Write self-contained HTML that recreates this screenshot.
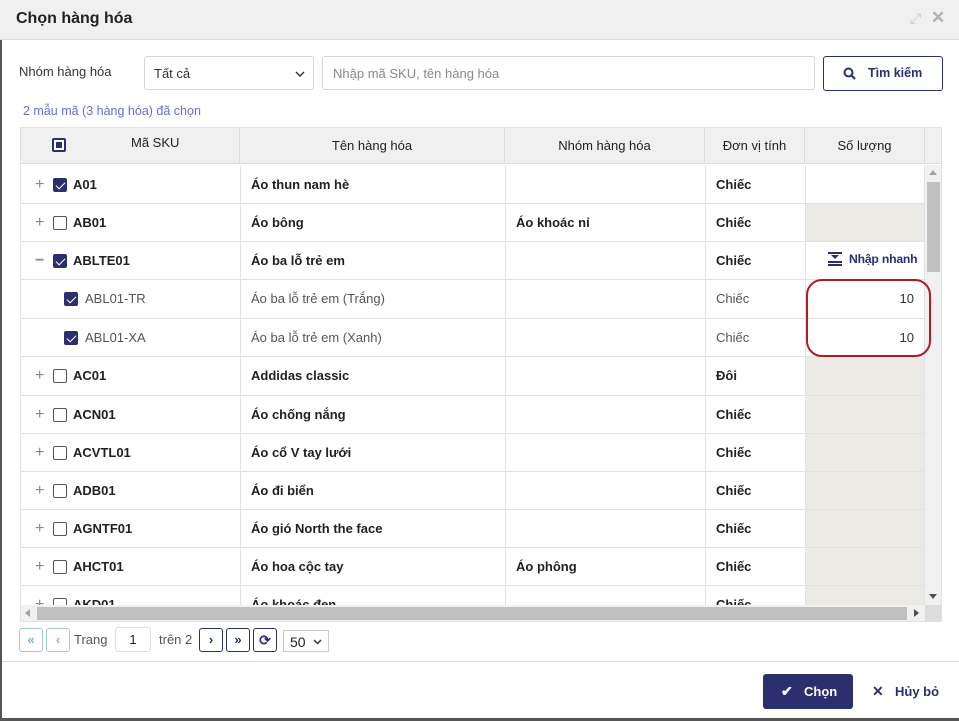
<!DOCTYPE html>
<html><head><meta charset="utf-8"><style>
*{box-sizing:border-box;margin:0;padding:0}
body{width:959px;height:721px;overflow:hidden;background:#fff;font-family:"Liberation Sans",Arial,sans-serif;font-size:13px;color:#212121;position:relative}
.a{position:absolute}
.hdr{left:0;top:0;width:959px;height:40px;background:#f0f0f0;border-bottom:1px solid #dcdcdc}
.cb{position:absolute;width:14px;height:14px;border:1.5px solid #555;border-radius:2px;background:#fff}
.cb.on{background:#2b2f6e;border-color:#2b2f6e}
.cb.on:after{content:"";position:absolute;left:3.5px;top:0.5px;width:4px;height:8px;border:solid #fff;border-width:0 1.8px 1.8px 0;transform:rotate(45deg)}
.row{position:absolute;left:21px;width:904px;height:38px;border-bottom:1px solid #e2e2e2}
.c{position:absolute;top:0;height:100%;border-right:1px solid #e2e2e2;line-height:38px;white-space:nowrap;overflow:hidden}
.b{font-weight:bold}
.g{color:#555}
.plus{position:absolute;left:14px;top:13px;font-size:16px;color:#888;line-height:12px}
.pbtn{position:absolute;top:628px;width:24px;height:24px;border:1px solid #2b2f6e;border-radius:3px;text-align:center;line-height:22px;color:#2b2f6e;font-size:13px;font-weight:bold}
</style></head><body>
<div class="a" style="left:0;top:0;width:2px;height:721px;background:#555"></div>
<div class="a" style="left:0;top:718px;width:959px;height:3px;background:#555"></div>
<div class="a hdr"></div>
<div class="a b" style="left:16px;top:10px;font-size:16px;color:#222">Chọn hàng hóa</div>
<div class="a" style="left:910px;top:10px;color:#c8c8c8;font-size:14px">⤢</div>
<div class="a" style="left:931px;top:8px;color:#b0b0b0;font-size:17px;font-weight:bold">✕</div>

<div class="a" style="left:19px;top:64px;font-size:13px;color:#333">Nhóm hàng hóa</div>
<div class="a" style="left:144px;top:56px;width:170px;height:34px;border:1px solid #d5d5d5;border-radius:3px;padding:9px 9px;color:#333">Tất cả<svg style="position:absolute;right:8px;top:14px" width="10" height="7"><path d="M1 1l4 4 4-4" stroke="#333" stroke-width="1.4" fill="none"/></svg></div>
<div class="a" style="left:322px;top:56px;width:493px;height:34px;border:1px solid #d5d5d5;border-radius:3px;padding:9px 10px;color:#888">Nhập mã SKU, tên hàng hóa</div>
<div class="a" style="left:823px;top:56px;width:120px;height:35px;border:1.5px solid #2b2f6e;border-radius:3px;line-height:32px;color:#2b2f6e;font-weight:bold;font-size:12.5px"><svg style="position:absolute;left:19px;top:10px" width="13" height="13"><circle cx="5.5" cy="5.5" r="4" stroke="#2b2f6e" stroke-width="2" fill="none"/><path d="M8.5 8.5l3.5 3.5" stroke="#2b2f6e" stroke-width="2.2"/></svg><span style="position:absolute;left:44px">Tìm kiếm</span></div>

<div class="a" style="left:23px;top:104px;color:#6a6ad8;font-size:12.5px">2 mẫu mã (3 hàng hóa) đã chọn</div>

<div class="a" style="left:20px;top:127px;width:922px;height:495px;border:1px solid #e2e2e2"></div>
<div class="a" style="left:21px;top:128px;width:920px;height:36px;background:#f0f0f0;border-bottom:1px solid #ddd"></div>
<div class="a" style="left:21px;top:128px;height:36px;width:920px">
 <div class="c" style="left:0;width:219px;border-color:#ddd"><div class="cb" style="left:31px;top:10px;border:2px solid #2b2f6e"><div style="position:absolute;left:2px;top:2px;width:6px;height:6px;background:#2b2f6e"></div></div><span style="position:absolute;left:110px;top:-4px">Mã SKU</span></div>
 <div class="c" style="left:219px;width:265px;text-align:center;border-color:#ddd;line-height:36px">Tên hàng hóa</div>
 <div class="c" style="left:484px;width:200px;text-align:center;border-color:#ddd;line-height:36px">Nhóm hàng hóa</div>
 <div class="c" style="left:684px;width:100px;text-align:center;border-color:#ddd;line-height:36px">Đơn vị tính</div>
 <div class="c" style="left:784px;width:120px;text-align:center;border-color:#ddd;line-height:36px">Số lượng</div>
</div>

<div class="a" style="left:0;top:0">
<div class="row" style="top:166px"><div class="c" style="left:0;width:220px"><span class="plus">+</span><div class="cb on" style="left:32px;top:12px"></div><span class="b" style="position:absolute;left:52px">A01</span></div><div class="c b" style="left:220px;width:265px;padding-left:10px">Áo thun nam hè</div><div class="c" style="left:485px;width:200px"></div><div class="c b" style="left:685px;width:100px;padding-left:10px">Chiếc</div><div class="c" style="left:785px;width:119px"></div></div>
<div class="row" style="top:204px"><div class="c" style="left:0;width:220px"><span class="plus">+</span><div class="cb" style="left:32px;top:12px"></div><span class="b" style="position:absolute;left:52px">AB01</span></div><div class="c b" style="left:220px;width:265px;padding-left:10px">Áo bông</div><div class="c b" style="left:485px;width:200px;padding-left:10px">Áo khoác nỉ</div><div class="c b" style="left:685px;width:100px;padding-left:10px">Chiếc</div><div class="c" style="left:785px;width:119px;background:#ebeae4"></div></div>
<div class="row" style="top:242px"><div class="c" style="left:0;width:220px"><span class="plus" style="font-weight:bold">−</span><div class="cb on" style="left:32px;top:12px"></div><span class="b" style="position:absolute;left:52px">ABLTE01</span></div><div class="c b" style="left:220px;width:265px;padding-left:10px">Áo ba lỗ trẻ em</div><div class="c" style="left:485px;width:200px"></div><div class="c b" style="left:685px;width:100px;padding-left:10px">Chiếc</div><div class="c" style="left:785px;width:119px;color:#2b2f6e;font-weight:bold;overflow:visible"><svg style="position:absolute;left:22px;top:10px" width="14" height="15"><path d="M0 1h14M0 13h14M0 10h14" stroke="#2b2f6e" stroke-width="2"/><path d="M3 3h8l-4 4z" fill="#2b2f6e"/></svg><span style="position:absolute;left:43px;top:-2px;font-size:12.2px;letter-spacing:-0.2px">Nhập nhanh</span></div></div>
<div class="row" style="top:280px;height:39px"><div class="c" style="left:0;width:220px"><div class="cb on" style="left:43px;top:12px"></div><span class="g" style="position:absolute;left:64px">ABL01-TR</span></div><div class="c g" style="left:220px;width:265px;padding-left:10px">Áo ba lỗ trẻ em (Trắng)</div><div class="c" style="left:485px;width:200px"></div><div class="c g" style="left:685px;width:100px;padding-left:10px">Chiếc</div><div class="c" style="left:785px;width:119px;text-align:right;padding-right:10px;color:#333">10</div></div>
<div class="row" style="top:319px"><div class="c" style="left:0;width:220px"><div class="cb on" style="left:43px;top:12px"></div><span class="g" style="position:absolute;left:64px">ABL01-XA</span></div><div class="c g" style="left:220px;width:265px;padding-left:10px">Áo ba lỗ trẻ em (Xanh)</div><div class="c" style="left:485px;width:200px"></div><div class="c g" style="left:685px;width:100px;padding-left:10px">Chiếc</div><div class="c" style="left:785px;width:119px;text-align:right;padding-right:10px;color:#333">10</div></div>
</div>

<div class="a" style="left:0;top:0">
<div class="row" style="top:357px;height:39px"><div class="c" style="left:0;width:220px"><span class="plus">+</span><div class="cb" style="left:32px;top:12px"></div><span class="b" style="position:absolute;left:52px">AC01</span></div><div class="c b" style="left:220px;width:265px;padding-left:10px">Addidas classic</div><div class="c" style="left:485px;width:200px"></div><div class="c b" style="left:685px;width:100px;padding-left:10px">Đôi</div><div class="c" style="left:785px;width:119px;background:#ebeae4"></div></div>
<div class="row" style="top:396px"><div class="c" style="left:0;width:220px"><span class="plus">+</span><div class="cb" style="left:32px;top:12px"></div><span class="b" style="position:absolute;left:52px">ACN01</span></div><div class="c b" style="left:220px;width:265px;padding-left:10px">Áo chống nắng</div><div class="c" style="left:485px;width:200px"></div><div class="c b" style="left:685px;width:100px;padding-left:10px">Chiếc</div><div class="c" style="left:785px;width:119px;background:#ebeae4"></div></div>
<div class="row" style="top:434px"><div class="c" style="left:0;width:220px"><span class="plus">+</span><div class="cb" style="left:32px;top:12px"></div><span class="b" style="position:absolute;left:52px">ACVTL01</span></div><div class="c b" style="left:220px;width:265px;padding-left:10px">Áo cổ V tay lưới</div><div class="c" style="left:485px;width:200px"></div><div class="c b" style="left:685px;width:100px;padding-left:10px">Chiếc</div><div class="c" style="left:785px;width:119px;background:#ebeae4"></div></div>
<div class="row" style="top:472px"><div class="c" style="left:0;width:220px"><span class="plus">+</span><div class="cb" style="left:32px;top:12px"></div><span class="b" style="position:absolute;left:52px">ADB01</span></div><div class="c b" style="left:220px;width:265px;padding-left:10px">Áo đi biển</div><div class="c" style="left:485px;width:200px"></div><div class="c b" style="left:685px;width:100px;padding-left:10px">Chiếc</div><div class="c" style="left:785px;width:119px;background:#ebeae4"></div></div>
<div class="row" style="top:510px"><div class="c" style="left:0;width:220px"><span class="plus">+</span><div class="cb" style="left:32px;top:12px"></div><span class="b" style="position:absolute;left:52px">AGNTF01</span></div><div class="c b" style="left:220px;width:265px;padding-left:10px">Áo gió North the face</div><div class="c" style="left:485px;width:200px"></div><div class="c b" style="left:685px;width:100px;padding-left:10px">Chiếc</div><div class="c" style="left:785px;width:119px;background:#ebeae4"></div></div>
<div class="row" style="top:548px"><div class="c" style="left:0;width:220px"><span class="plus">+</span><div class="cb" style="left:32px;top:12px"></div><span class="b" style="position:absolute;left:52px">AHCT01</span></div><div class="c b" style="left:220px;width:265px;padding-left:10px">Áo hoa cộc tay</div><div class="c b" style="left:485px;width:200px;padding-left:10px">Áo phông</div><div class="c b" style="left:685px;width:100px;padding-left:10px">Chiếc</div><div class="c" style="left:785px;width:119px;background:#ebeae4"></div></div>
<div class="row" style="top:586px;height:19px;overflow:hidden;border:0"><div class="c" style="left:0;width:220px"><span class="plus">+</span><div class="cb" style="left:32px;top:12px"></div><span class="b" style="position:absolute;left:52px">AKD01</span></div><div class="c b" style="left:220px;width:265px;padding-left:10px">Áo khoác đen</div><div class="c" style="left:485px;width:200px"></div><div class="c b" style="left:685px;width:100px;padding-left:10px">Chiếc</div><div class="c" style="left:785px;width:119px;background:#ebeae4"></div></div>
</div>

<div class="a" style="left:925px;top:165px;width:16px;height:440px;background:#f1f1f1"></div>
<div class="a" style="left:927px;top:182px;width:13px;height:90px;background:#c1c1c1"></div>
<div class="a" style="left:929px;top:170px;width:0;height:0;border:4px solid transparent;border-bottom:5px solid #a3a3a3;border-top:0"></div>
<div class="a" style="left:929px;top:594px;width:0;height:0;border:4px solid transparent;border-top:5px solid #505050;border-bottom:0"></div>
<div class="a" style="left:21px;top:605px;width:904px;height:16px;background:#f1f1f1"></div>
<div class="a" style="left:37px;top:607px;width:870px;height:13px;background:#c1c1c1"></div>
<div class="a" style="left:925px;top:605px;width:16px;height:16px;background:#dcdcdc"></div>
<div class="a" style="left:25px;top:609px;width:0;height:0;border:4px solid transparent;border-right:5px solid #a3a3a3;border-left:0"></div>
<div class="a" style="left:914px;top:609px;width:0;height:0;border:4px solid transparent;border-left:5px solid #505050;border-right:0"></div>

<div class="a" style="left:806px;top:279px;width:125px;height:78px;border:2px solid #b01c24;border-radius:16px"></div>

<div class="pbtn" style="left:19px;border-color:#a9c8dc;color:#8cb0cf">«</div>
<div class="pbtn" style="left:46px;border-color:#a9c8dc;color:#8cb0cf">‹</div>
<div class="a" style="left:74px;top:632px;color:#555">Trang</div>
<div class="a" style="left:115px;top:627px;width:36px;height:25px;border:1px solid #ddd;border-radius:3px;text-align:center;line-height:23px">1</div>
<div class="a" style="left:159px;top:632px;color:#555">trên 2</div>
<div class="pbtn" style="left:199px">›</div>
<div class="pbtn" style="left:226px">»</div>
<div class="pbtn" style="left:253px;font-size:14px">⟳</div>
<div class="a" style="left:283px;top:630px;width:46px;height:22px;border:1px solid #ccc;padding:3px 6px;font-size:14px">50<svg style="position:absolute;right:6px;top:8px" width="9" height="6"><path d="M1 1l3.5 3.5 3.5-3.5" stroke="#333" stroke-width="1.5" fill="none"/></svg></div>

<div class="a" style="left:2px;top:661px;width:957px;height:1px;background:#ddd"></div>
<div class="a" style="left:763px;top:674px;width:90px;height:35px;background:#2b2f6e;border-radius:3px;color:#fff;font-weight:bold;line-height:35px"><span style="position:absolute;left:18px;font-size:14px">✔</span><span style="position:absolute;left:41px">Chọn</span></div>
<div class="a b" style="left:872px;top:683px;color:#2b2f6e;font-size:14px">✕</div>
<div class="a b" style="left:895px;top:684px;color:#2b2f6e">Hủy bỏ</div>
</body></html>
